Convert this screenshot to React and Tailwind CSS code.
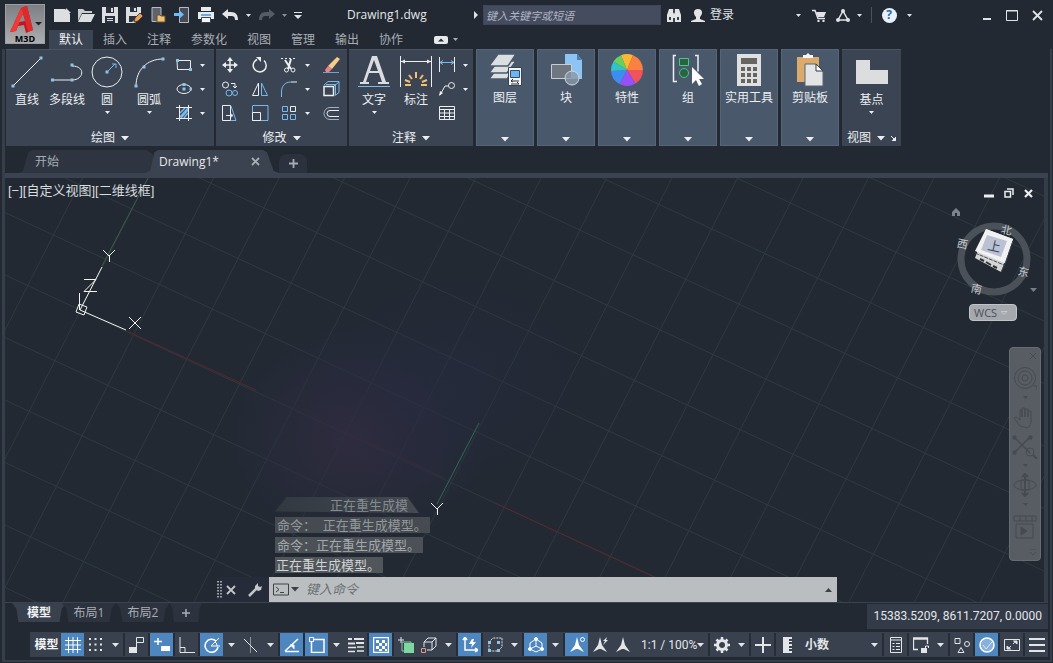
import React from 'react';

function Ic({ w = 16, h = w, children, className = '' }) {
  return (
    <svg width={w} height={h} viewBox={`0 0 ${w} ${h}`} fill="none" stroke="currentColor" className={`shrink-0 ${className}`} aria-hidden="true">
      {children}
    </svg>
  );
}

function Caret({ big = false }) {
  return big ? (
    <Ic w={8} h={5}><path d="M0 0h8L4 4.500z" fill="currentColor" stroke="none" /></Ic>
  ) : (
    <Ic w={5} h={3}><path d="M0 0h5L2.500 3z" fill="currentColor" stroke="none" /></Ic>
  );
}

function Btn({ label, className = '', children }) {
  return (
    <button type="button" aria-label={label} className={`flex shrink-0 items-center justify-center ${className}`}>
      {children}
    </button>
  );
}

/* ---------- title bar ---------- */

const quickAccess = [
  ['新建', <Ic w={17} h={14} key="n"><path d="M0 1h11l5 5v8H0z" fill="#dcdfe2" stroke="none" /><path d="M12 0v5h5z" fill="#dcdfe2" stroke="none" /></Ic>],
  ['打开', <Ic w={18} h={14} key="o"><path d="M1 13V1h5l2 2h7v2H5z" fill="#c9ccd0" stroke="none" /><path d="M5 6h13l-4 8H1z" fill="#dcdfe2" stroke="none" /></Ic>],
  ['保存', <Ic w={16} key="s"><path d="M0 0h16v16H0z" fill="#dcdfe2" stroke="none" /><path d="M4 0h8v6H4zM3 9h10v7H3z" fill="#2b323c" stroke="none" /><path d="M9 1h2v4H9zM5 11h6v1H5zM5 13h6v1H5z" fill="#dcdfe2" stroke="none" /></Ic>],
  ['另存为', <Ic w={17} h={16} key="sa"><path d="M0 0h15v10l-6 6H0z" fill="#dcdfe2" stroke="none" /><path d="M4 0h7v5H4zM3 9h8v2l-5 4H3z" fill="#2b323c" stroke="none" /><path d="M8 1h2v3H8z" fill="#dcdfe2" stroke="none" /><path d="M8 15l1-4 5-5 3 3-5 5z" fill="#e9a25c" stroke="#5b3b28" /></Ic>],
  ['从移动设备打开', <Ic w={16} key="m"><path d="M2 .5h9v14H2z" fill="#5d646e" stroke="#b8bcc2" /><path d="M7 15V8h3l1 1h4v6z" fill="#f1c376" stroke="#6d5330" /></Ic>],
  ['保存到移动设备', <Ic w={16} key="sm"><path d="M5.500 .5h9v15h-9z" fill="#454c57" stroke="#b8bcc2" /><path d="M0 6h5V3l5 4.500L5 12V9H0z" fill="#74b9f2" stroke="none" /></Ic>],
  ['打印', <Ic w={16} key="p"><path d="M3 0h10v4H3zM0 5h16v7H0z" fill="#e8eaec" stroke="none" /><path d="M3 7h10v2H3z" fill="#69a9e6" stroke="none" /><path d="M3.500 10.500h9v5h-9z" fill="#f4f5f6" stroke="#3a4250" /></Ic>],
  ['放弃', <Ic w={17} h={12} key="u"><path d="M0 5l6-5v3h3c5 0 7 3 7 8h-3c0-3-1-4-4-4H6v3z" fill="#e2e4e7" stroke="none" /></Ic>],
];

function TitleBar() {
  return (
    <header className="flex pl-[5px] text-[#dfe2e6]">
      <button type="button" aria-label="应用程序菜单" className="relative mt-1 h-10 w-10 shrink-0 border border-[#9b9ea2] bg-linear-to-b from-[#7c7f83] to-[#acaeb1]">
        <svg width="38" height="38" viewBox="0 0 38 38" className="block" aria-hidden="true">
          <path d="M4 27 15 3l6-2 6 24-7 3-2-8-6 1-2 5z" fill="#c4161f" />
          <path d="M4 27 15 3l3 3-6 15-2 5z" fill="#ef3b35" />
          <path d="M15 3l6-2 6 24-5 2-5-19z" fill="#dd2a2c" />
          <path d="M13 17l4-8 2 7z" fill="#8b8d90" />
          <path d="M29 17h7l-3.500 3.500z" fill="#222" />
        </svg>
        <span className="absolute inset-x-0 bottom-0 text-center text-[9px] leading-[9px] font-bold text-black">M3D</span>
      </button>
      <div className="ml-[3px] min-w-0 flex-1">
        <div className="flex h-[30px] items-center pl-[2px]">
          {quickAccess.map(([label, icon]) => (
            <Btn key={label} label={label} className="h-6 w-6">{icon}</Btn>
          ))}
          <Btn label="放弃列表" className="h-6 w-3"><Caret /></Btn>
          <Btn label="重做" className="h-6 w-6 text-[#555c66]"><Ic w={17} h={12}><path d="M17 5l-6-5v3H8C3 3 1 6 1 11h3c0-3 1-4 4-4h3v3z" fill="currentColor" stroke="none" /></Ic></Btn>
          <Btn label="重做列表" className="h-6 w-3 text-[#8a9099]"><Caret /></Btn>
          <Btn label="自定义快速访问工具栏" className="h-6 w-4"><Ic w={8} h={7}><path d="M0 .5h8" /><path d="M0 3h8L4 7z" fill="currentColor" stroke="none" /></Ic></Btn>
          <h1 className="ml-[41px] flex-1 text-[12px] text-[#e4e6e9]">Drawing1.dwg</h1>
          <Btn label="展开搜索" className="w-[14px]"><Ic w={4} h={8}><path d="M0 0v8l4-4z" fill="currentColor" stroke="none" /></Ic></Btn>
          <input aria-label="搜索" placeholder="键入关键字或短语" className="h-5 w-[178px] border border-[#3e4556] bg-[#454c60] px-[2px] text-[11px] italic outline-none placeholder:text-[#b0b5c0]" />
          <Btn label="查找" className="h-6 w-[26px]"><Ic w={14} h={13}><path d="M2 0h4v3l1 2v8H0V6zM12 0H8v3L7 5v8h7V6z" fill="#e2e4e7" stroke="none" /><path d="M2 8h2v3H2zM10 8h2v3h-2zM6 0h2v3H6zM6 9h2v4H6z" fill="#39414d" stroke="none" /></Ic></Btn>
          <button type="button" className="flex items-center gap-[5px] pl-1">
            <Ic w={14}><path d="M7 1c5 0 5 5 2 8v2l5 2v2H0v-2l5-2V9C2 6 2 1 7 1z" fill="#e2e4e7" stroke="none" /></Ic>
            <span>登录</span>
          </button>
          <Btn label="登录选项" className="ml-[60px] h-6 w-2"><Caret /></Btn>
          <Btn label="应用商店" className="ml-[5px] h-6 w-6"><Ic w={14}><path d="M0 2.500h3l3 8h7" strokeWidth="1.500" /><path d="M4 4h10l-2 5H6z" fill="currentColor" stroke="none" /><circle cx="6.500" cy="13" r="1.200" fill="currentColor" stroke="none" /><circle cx="11.500" cy="13" r="1.200" fill="currentColor" stroke="none" /></Ic></Btn>
          <Btn label="Autodesk" className="h-6 w-6"><Ic w={14} h={13}><path d="M7 2 2 11h10z" strokeWidth="1.500" /><g fill="currentColor" stroke="none"><circle cx="7" cy="2" r="2" /><circle cx="2" cy="11" r="2" /><circle cx="12" cy="11" r="2" /></g></Ic></Btn>
          <Btn label="Autodesk 选项" className="h-6 w-2"><Caret /></Btn>
          <span className="ml-2 h-4 w-px bg-[#4b525e]" />
          <Btn label="帮助" className="ml-[5px] h-6 w-6"><span className="flex h-[15px] w-[15px] items-center justify-center rounded-full bg-[#e8f1fb] text-[12px] leading-none font-bold text-[#2b6aa8]">?</span></Btn>
          <Btn label="帮助选项" className="ml-1 h-6 w-2"><Caret /></Btn>
          <Btn label="最小化" className="ml-[62px] h-6 w-6"><Ic w={8} h={12}><path d="M0 10h8" strokeWidth="2" /></Ic></Btn>
          <Btn label="最大化" className="h-6 w-[26px]"><Ic w={12} h={11}><path d="M.5 .5h11v10H.5z" /><path d="M0 1h12" /></Ic></Btn>
          <Btn label="关闭" className="mr-1 h-6 w-6"><Ic w={11}><path d="M1 1l9 9M10 1l-9 9" strokeWidth="1.800" /></Ic></Btn>
        </div>
        <nav className="flex h-[19px] items-stretch pl-px text-[#a9aeb6]" aria-label="功能区选项卡">
          {['默认', '插入', '注释', '参数化', '视图', '管理', '输出', '协作'].map((t, i) => (
            <button key={t} type="button" className={i === 0 ? 'bg-[#3b4453] px-[10px] text-[#f1f2f4]' : 'px-[10px]'}>{t}</button>
          ))}
          <Btn label="最小化功能区" className="ml-[21px] gap-[5px]"><Ic w={14} h={8}><rect width="14" height="8" rx="2" fill="#e6e8ea" stroke="none" /><path d="M4 5.500h6L7 2.500z" fill="#252c36" stroke="none" /></Ic><Caret /></Btn>
        </nav>
      </div>
    </header>
  );
}

/* ---------- ribbon ---------- */

const dot = (x, y) => <path d={`M${x - 1.5} ${y - 1.5}h3v3h-3z`} fill="#8fc3ea" stroke="none" />;

function Big({ label, className = '', caret, children }) {
  return (
    <button type="button" className={`flex shrink-0 flex-col items-center ${className}`}>
      {children}
      <span className="mt-1 leading-4 whitespace-nowrap">{label}</span>
      {caret && <span className="mt-[3px]"><Caret /></span>}
    </button>
  );
}

function Small({ label, caret, children }) {
  return (
    <Btn label={label} className="h-6 gap-2">
      {children}
      {caret && <Caret />}
    </Btn>
  );
}

function Panel({ title, className = '', launcher, children }) {
  return (
    <section className={`flex flex-col border-t border-[#4a5362] bg-[#3b4453] ${className}`}>
      <div className="flex flex-1 items-start">{children}</div>
      <button type="button" className="flex h-4 items-center justify-center gap-[6px]">
        <span>{title}</span>
        <Caret big />
        {launcher && <Ic w={5}><path d="M0 0l4 4M5 1v4H1z" fill="currentColor" /></Ic>}
      </button>
    </section>
  );
}

function Tile({ label, children }) {
  return (
    <button type="button" className="flex w-[58px] shrink-0 flex-col items-center border border-[#56647a] bg-[#4a586c] pt-[3px]">
      {children}
      <span className="mt-[3px] leading-4 whitespace-nowrap">{label}</span>
      <span className="mt-auto mb-[3px]"><Caret big /></span>
    </button>
  );
}

const B = '#79b9ec';

function Ribbon() {
  return (
    <div className="flex h-[97px] gap-[3px] pl-px text-[#eceef1]">
      <div className="flex gap-[2px]">
        <Panel title="绘图" className="w-[208px]">
          <div className="flex pt-[6px] pl-[5px]">
            <Big label="直线" className="w-8"><Ic w={32}><path d="M2 30 30 2" />{dot(2, 30)}{dot(30, 2)}</Ic></Big>
            <Big label="多段线" className="ml-1 w-10"><Ic w={32}><path d="M1 24h20c12 0 14-14 0-14" />{dot(1.5, 24)}{dot(21, 24)}{dot(21, 9)}</Ic></Big>
            <Big label="圆" caret className="w-10"><Ic w={32}><circle cx="16" cy="16" r="15" /><path d="M16 16 24 8M21 8h4v4" stroke={B} />{dot(16, 16)}</Ic></Big>
            <Big label="圆弧" caret className="w-11"><Ic w={32}><path d="M3 30C3 14 14 3 30 3" />{dot(3, 30)}{dot(11, 11)}{dot(30, 3)}</Ic></Big>
          </div>
          <div className="ml-[5px] flex flex-col pt-[3px]">
            <Small label="矩形" caret><Ic><path d="M1 3.500h13.500v9H1.500z" />{dot(1.5, 3.5)}{dot(14.5, 12.5)}</Ic></Small>
            <Small label="椭圆" caret><Ic><ellipse cx="8" cy="8" rx="7" ry="4.500" />{dot(8, 8)}{dot(8, 3.5)}{dot(15, 8)}</Ic></Small>
            <Small label="图案填充" caret><Ic><path d="M4 8l5-5M4 12l8-9M5 13l7-8M8 13l4-5" stroke={B} strokeWidth="1.500" /><path d="M3.500 0v16M12.500 0v16M0 2.500h16M0 13.500h16" /></Ic></Small>
          </div>
        </Panel>
        <Panel title="修改" className="w-[131px]">
          <div className="grid flex-1 grid-cols-[30px_29px_42px_24px] justify-items-start pt-[3px] pl-[6px]">
            <Small label="移动"><Ic><path d="M8 2v12M2 8h12" strokeWidth="1.500" /><path d="M8 0l3 4H5zM8 16l3-4H5zM0 8l4-3v6zM16 8l-4-3v6z" fill="currentColor" stroke="none" /></Ic></Small>
            <Small label="旋转"><Ic><path d="M5 2.500a6.500 6.500 0 1 0 7 1" strokeWidth="1.500" /><path d="M4 0h5v5z" fill="currentColor" stroke="none" /></Ic></Small>
            <Small label="修剪" caret><Ic><path d="M0 1.500h2M4 1.500h2M8 1.500h2M12 1.500h2" /><path d="M4 3l6 9M10 2 7 12" strokeWidth="2" /><circle cx="5.500" cy="13" r="2" /><circle cx="12" cy="13" r="2" /></Ic></Small>
            <Small label="删除"><Ic w={17} h={16}><path d="M14 0l3 2-8 10-4-3z" fill="#f5cf8a" stroke="none" /><path d="M5 9l4 3-3 3H3l-1-2z" fill="#f0808d" stroke="none" /><path d="M0 15.500h16" stroke="#6fa5d3" /></Ic></Small>
            <Small label="复制"><Ic><circle cx="3.500" cy="4" r="3" /><path d="M9 2.500h4v4M11 5l2 2 2-2" /><circle cx="7" cy="12" r="3" stroke={B} /><circle cx="13" cy="12" r="2.500" stroke={B} /></Ic></Small>
            <Small label="镜像"><Ic><path d="M6.500 2v12.500H.5z" /><path d="M9.500 2v12.500h6z" stroke={B} /></Ic></Small>
            <Small label="圆角" caret><Ic><path d="M.5 16V11C.5 5 4 1 10 1" stroke={B} /><path d="M10 1h6" /></Ic></Small>
            <Small label="分解"><Ic w={17} h={16}><path d="M1 5.500h9.500v9H1z" strokeWidth="1.500" /><path d="M1 4 5 .5h11v11l-4 3M11 5l5-4M12.500 4v10M3 3.500h10" stroke={B} /></Ic></Small>
            <Small label="拉伸"><Ic><path d="M.5 .5h8v15h-8z" /><path d="M9 1l5 14.500H9" stroke={B} /><path d="M4 10.500h6M8 8l3 2.500L8 13" /></Ic></Small>
            <Small label="缩放"><Ic w={17} h={16}><path d="M1 .5h15v15" stroke={B} /><path d="M.5 .5v15H16" stroke={B} /><path d="M.5 7.500h8v8h-8z" /></Ic></Small>
            <Small label="阵列" caret><Ic w={16}><path d="M1.500 1.500h5v5h-5zM1.500 9.500h5v5h-5zM9.500 9.500h5v5h-5z" stroke={B} /><path d="M9.500 1.500h5v5h-5z" /></Ic></Small>
            <Small label="偏移"><Ic w={17} h={16}><path d="M16 5.500H7a3 3 0 0 0 0 6h9" /><path d="M16 2.500H7a5.500 5.500 0 0 0 0 12h9" stroke="#9fb3c8" /></Ic></Small>
          </div>
        </Panel>
        <Panel title="注释" className="w-[124px]">
          <div className="flex pt-[6px] pl-[5px]">
            <Big label="文字" caret className="w-10"><Ic w={32}><path d="M14 0h5l9 26h3v2H20v-2h4l-3-9h-10l-3 9h3v2H2v-2h3zM12 15h8l-4-11z" fill="#d9dce0" stroke="none" /><path d="M0 30.500h32" stroke={B} /></Ic></Big>
            <Big label="标注" className="ml-[2px] w-10"><Ic w={32}><path d="M.5 0v31M31.500 0v31M1 5.500h30" /><path d="M1 5.500l4-2v4zM31 5.500l-4-2v4z" fill="currentColor" stroke="none" /><g stroke="#f5bf72" strokeWidth="2"><path d="M16 16v6M9 19l3 4M23 19l-3 4M5 24l5 2M27 24l-5 2M5 29h6M21 29h6" /></g></Ic></Big>
          </div>
          <div className="ml-[3px] flex flex-col items-start pt-[3px]">
            <Small label="线性标注" caret><Ic><path d="M.5 0v15M15.500 0v15" /><path d="M1 5.500h14M4 3.500l-3 2 3 2M12 3.500l3 2-3 2" stroke={B} /></Ic></Small>
            <Small label="引线" caret><Ic><path d="M1 14l5-9h4" /><circle cx="12.500" cy="4.500" r="3" /><path d="M0 15l1-5 3 2z" fill="currentColor" stroke="none" /></Ic></Small>
            <Small label="表格"><Ic><path d="M.5 1.500h15v13H.5zM0 4.500h16M0 8h16M0 11.500h16M5.500 4v10M10.500 4v10" /></Ic></Small>
          </div>
        </Panel>
      </div>
      <Tile label="图层"><Ic w={33} h={34}><g fill="#dcdfe2" stroke="#4a586c" strokeWidth="1.500"><path d="M9 14h18l-9 12H0z" /><path d="M9 8h18l-9 12H0z" /><path d="M9 1h18l-8 12H0z" /></g><path d="M19.500 14.500h13v18h-13z" fill="#f2f4f6" stroke="#3a4453" /><path d="M21.500 17.500h9v7h-9z" fill="#6fb5ee" stroke="#2d4e70" /><path d="M22 28h8M22 31h8M24 26l-2 2 2 1M28 29l2 2" stroke="#333" /></Ic></Tile>
      <Tile label="块"><Ic w={33} h={34}><path d="M15 1h12l5 6v19H15z" fill="#8dc4f3" stroke="none" /><path d="M27 1v6h5z" fill="#4a7fae" stroke="none" /><path d="M1.500 11.500h20v14h-20z" fill="#6f7680" stroke="#c9ccd1" /><circle cx="22" cy="25" r="7" fill="#8a98a9" fillOpacity=".8" stroke="#d5d8dc" /></Ic></Tile>
      <Tile label="特性"><Ic w={34}><g stroke="none"><path d="M17 17 11 2.200A16 16 0 0 1 23 2.200z" fill="#fdb833" /><path d="M17 17 23 2.200A16 16 0 0 1 33 17z" fill="#fb8140" /><path d="M17 17H33a16 16 0 0 1-7.500 13.500z" fill="#f0535b" /><path d="M17 17l8.500 13.500a16 16 0 0 1-16 0.500z" fill="#9650f5" /><path d="M17 17 9.500 31A16 16 0 0 1 1 18z" fill="#3f8df0" /><path d="M17 17 1 18A16 16 0 0 1 3.500 8.500z" fill="#2fc4c9" /><path d="M17 17 3.500 8.500A16 16 0 0 1 11 2.200z" fill="#6bcf5e" /></g></Ic></Tile>
      <Tile label="组"><Ic w={34}><path d="M5 2.500H2.500v26H6M24 2.500h3v16" strokeWidth="1.500" /><path d="M8.500 5.500h9v7h-9z" fill="#286344" stroke="#4fc486" /><circle cx="13" cy="20" r="4.500" fill="#286344" stroke="#4fc486" /><path d="M21 14v17l4-4 3 6 3-2-3-5h5z" fill="#fff" stroke="none" /></Ic></Tile>
      <Tile label="实用工具"><Ic w={24} h={34}><path d="M0 1h24v32H0z" fill="#dfe0e2" stroke="none" /><path d="M4 5h16v6H4zM4 14h4v4H4zM10 14h4v4h-4zM16 14h4v4h-4zM4 20h4v4H4zM10 20h4v4h-4zM16 20h4v4h-4zM4 26h4v4H4zM10 26h4v4h-4zM16 26h4v4h-4z" fill="#68645f" stroke="none" /></Ic></Tile>
      <Tile label="剪贴板"><Ic w={28} h={34}><path d="M1 4h22v25H1z" fill="#dcaa6c" stroke="none" /><path d="M7 5V2h3l2-2 2 2h3v3z" fill="#f5f6f7" stroke="none" /><path d="M9 11h11l7 7v15H9z" fill="#e3e4e6" stroke="#5b6472" /><path d="M20 11v7h7z" fill="#fff" stroke="#2f3844" /></Ic></Tile>
      <Panel title="视图" launcher className="w-[59px]">
        <div className="flex flex-1 justify-center pt-[6px]">
          <Big label="基点" caret><Ic w={32}><path d="M0 4h14v10h18v14H0z" fill="#dcdddf" stroke="none" /></Ic></Big>
        </div>
      </Panel>
    </div>
  );
}

function FileTabs() {
  return (
    <nav className="flex h-8 items-end border-b-[5px] border-[#3b4350] pl-[14px] text-[12px] text-[#a7acb4]" aria-label="文件选项卡">
      <button type="button" className="h-[23px] w-[134px] bg-[#2e3541] pl-4 text-left [clip-path:polygon(0_100%,3%_90%,7%_10%,10%_0,95%_0,100%_20%,100%_100%)]">开始</button>
      <div className="-ml-2 flex h-[23px] w-[134px] items-center bg-[#3b4350] pr-[16px] pl-[14px] text-[#e7e9ec] [clip-path:polygon(0_100%,4%_90%,7%_10%,10%_0,88%_0,91%_10%,96%_90%,100%_100%)]">
        <button type="button" className="flex-1 text-left">Drawing1*</button>
        <Btn label="关闭图形" className="h-4 w-4 text-[#a9aeb6]"><Ic w={9}><path d="M1 1l7 7M8 1L1 8" strokeWidth="1.800" /></Ic></Btn>
      </div>
      <Btn label="新图形" className="h-[19px] w-7 rounded-t-lg bg-[#2b323d]"><Ic w={9}><path d="M4.500 0v9M0 4.500h9" strokeWidth="1.800" /></Ic></Btn>
    </nav>
  );
}

/* ---------- drawing area ---------- */

const range = (from, to) => Array.from({ length: to - from + 1 }, (_, i) => from + i);

function Grid() {
  return (
    <svg viewBox="0 0 1039 424" preserveAspectRatio="xMinYMin slice" className="absolute inset-0 h-full w-full" fill="none" aria-hidden="true">
      <defs>
        <radialGradient id="violet"><stop offset="0" stopColor="#332c42" stopOpacity=".8" /><stop offset=".6" stopColor="#2b2b40" stopOpacity=".5" /><stop offset="1" stopColor="#2a2b42" stopOpacity="0" /></radialGradient>
        <radialGradient id="navy"><stop offset="0" stopColor="#262b42" stopOpacity=".5" /><stop offset="1" stopColor="#262b42" stopOpacity="0" /></radialGradient>
      </defs>
      <g stroke="#2f3a3f">
        {range(-9, 5).map((k) => <path key={k} d={`M0 ${97 + 62.5 * k}L1040 ${97 + 62.5 * k + 484}`} />)}
        {range(-1, 20).map((k) => <path key={k} d={`M${143 + 65.5 * k} 0L${143 + 65.5 * k - 216} 424`} />)}
      </g>
      <ellipse cx="350" cy="260" rx="135" ry="115" fill="url(#violet)" />
      <ellipse cx="450" cy="200" rx="150" ry="120" fill="url(#navy)" />
      <path d="M97 88 143 0" stroke="#3c5c4c" />
      <path d="M432 326 474 245" stroke="#2b6a55" />
      <path d="M124 154 251 212" stroke="#5a2530" />
      <path d="M335 251 440 300" stroke="#372a3a" />
      <path d="M490 325 650 399" stroke="#5a2530" />
      <g stroke="#f2f3f4">
        <path d="M75 132 97 89M75 132l46 20M74.500 132V115M71 134l3-8 8 3-3 8-8-3z" />
        <path d="M98 72l6 6 6-6M104.500 78v6M79 101.500h12l-12 12h13M124 139l12 12M136 139l-12 12" />
        <path d="M426 325l6 6 6-6M432.500 331v6" />
      </g>
    </svg>
  );
}

function ViewCube() {
  return (
    <div className="absolute top-[20px] right-[3px] h-[124px] w-[90px] text-[#c8cbd0]">
      <svg width="90" height="124" viewBox="0 0 90 124" aria-hidden="true" fill="none">
        <path d="M1 18V14l4-4 4 4v4H6v-3H4v3z" fill="#7d838b" />
        <circle cx="43" cy="61" r="33" stroke="#4b5158" strokeWidth="7" />
        <path d="M35 31 62 41 50 74 24 60z" fill="#d3d5d7" />
        <path d="M24 53 35 31 62 41 54 65z" fill="#f1f1f1" />
        <path d="M36 37 56 43 50 59 30 52z" fill="#b9c1d2" />
        <path d="M24 55 53 67M62 43 54 66 50 74" stroke="#454b54" strokeDasharray="4 1" />
        <path d="M29 61l4 2M35 64l5 3M42 68l4 2" stroke="#333" strokeWidth="2" />
        <path d="M79 90h7l-3.500 4z" fill="#777d85" />
      </svg>
      <span className="absolute top-[40px] left-[37px] rotate-12 text-[13px] leading-4 text-[#414b64]">上</span>
      <span className="absolute top-[24px] left-[50px] rotate-12 text-[11px] leading-4">北</span>
      <span className="absolute top-[38px] left-[6px] rotate-12 text-[11px] leading-4">西</span>
      <span className="absolute top-[66px] left-[67px] rotate-12 text-[11px] leading-4">东</span>
      <span className="absolute top-[83px] left-[20px] rotate-12 text-[11px] leading-4">南</span>
      <button type="button" className="absolute top-[106px] left-[18px] flex h-[17px] w-12 items-center gap-1 rounded border border-[#c0c3c7] bg-[#a5a9ae] pl-1 text-[11px] leading-none text-[#4a5058]">
        WCS <Ic w={7} h={4}><path d="M0 .5h6L3 3.500z" stroke="#c6c9cd" /></Ic>
      </button>
    </div>
  );
}

function NavBar() {
  return (
    <div className="absolute top-[169px] right-[3px] flex w-8 flex-col items-center rounded border border-[#666c72] bg-[#575d62] py-1 text-[#454b51]">
      <Btn label="关闭导航栏" className="h-2 w-full justify-end pr-1"><Ic w={6}><path d="M0 0l6 6M6 0L0 6" /></Ic></Btn>
      <Btn label="控制盘" className="h-9 w-8"><Ic w={24}><circle cx="12" cy="12" r="10.500" /><circle cx="12" cy="12" r="7" /><circle cx="12" cy="12" r="3" /><path d="M20 20h4v4" /></Ic></Btn>
      <Caret />
      <Btn label="平移" className="h-9 w-8"><Ic w={24}><path d="M7 21 1 13l2-1 4 3V5h2v7-9h3v9-8h3v8-6h3v12l-3 5z" /></Ic></Btn>
      <Btn label="缩放" className="h-6 w-8"><Ic w={26} h={24}><path d="M2 2l16 16M18 2 2 18" strokeWidth="1.500" /><path d="M1 1h3v3H1zM17 1h3v3h-3zM1 16h3v3H1z" fill="currentColor" /><circle cx="18" cy="17" r="4" /><path d="M21 20l4 4" strokeWidth="2" /></Ic></Btn>
      <span className="mt-[5px]"><Caret /></span>
      <Btn label="动态观察" className="h-9 w-8"><Ic w={24}><path d="M12 1v22M9 4l3-3 3 3M9 20l3 3 3-3" strokeWidth="2" /><ellipse cx="12" cy="12" rx="11" ry="5" /><path d="M8 7h8v10H8z" /></Ic></Btn>
      <Caret />
      <Btn label="ShowMotion" className="h-[42px] w-8"><Ic w={24}><path d="M1 1h22v5H1zM7 1v5M13 1v5M19 1v5M3 9h17v14H3z" /><path d="M8 12v8l6-4z" fill="currentColor" /></Ic></Btn>
      <Btn label="导航栏选项" className="h-2 w-full justify-end pr-1"><Ic w={6}><path d="M0 3l3 3 3-3M0 0h6" /></Ic></Btn>
    </div>
  );
}

function CommandLine() {
  return (
    <div className="absolute right-[207px] bottom-0 left-[212px]">
      <div className="ml-[58px] flex flex-col items-start gap-1 pb-1 text-[13px] leading-4 text-[#a3a8ac]">
        <span className="w-36 bg-linear-to-r from-[#31383f] to-[#454b52] pl-[55px] text-[#858b90] [clip-path:polygon(8%_0,92%_0,100%_100%,0_90%)]">正在重生成模</span>
        <span className="bg-[#454b50] pr-[3px] pl-[2px] text-[#93989d] whitespace-pre">命令：  正在重生成模型。</span>
        <span className="bg-[#4b5156] pr-[3px] pl-[2px] whitespace-pre">命令：正在重生成模型。</span>
        <span className="bg-[#50565a] pr-[3px] pl-px text-[#d0d3d6]">正在重生成模型。</span>
      </div>
      <div className="flex h-[25px] items-stretch text-[#c3c7cc]">
        <span className="flex w-[52px] items-center justify-between bg-[#252b39] pr-[7px]">
          <Ic w={5} h={18}><path d="M1 0v18M4 0v18" strokeDasharray="1.500 1.500" strokeWidth="1.500" /></Ic>
          <span className="flex items-center gap-[12px]">
            <Btn label="关闭命令行"><Ic w={10}><path d="M1 1l8 8M9 1L1 9" strokeWidth="1.800" /></Ic></Btn>
            <Btn label="自定义"><Ic w={14}><path d="M1 13l8-8" strokeWidth="2.500" /><path d="M7 3l3-3v3l2 1 2-1-1 4-3 1-3-2z" fill="currentColor" stroke="none" /></Ic></Btn>
          </span>
        </span>
        <div className="flex flex-1 items-center bg-[#bbbec0] pr-[5px] pl-1 text-[#3c4148]">
          <Btn label="最近使用的命令" className="gap-[2px]"><Ic w={16} h={13}><path d="M.5 1h15v11H.5z" /><path d="M3 4l3 2.500L3 9M7 9.500h4" /></Ic><Caret big /></Btn>
          <input aria-label="命令" placeholder="键入命令" className="ml-[7px] h-full min-w-0 flex-1 bg-transparent pb-[2px] text-[13px] italic outline-none placeholder:text-[#6b7076]" />
          <Ic w={7} h={4}><path d="M0 4h7L3.500 0z" fill="currentColor" stroke="none" /></Ic>
        </div>
      </div>
    </div>
  );
}

function Drawing() {
  return (
    <main className="relative min-h-[300px] flex-1 overflow-hidden border-r-4 border-[#343b49] bg-[#222932]">
      <Grid />
      <button type="button" className="absolute top-[5px] left-[3px] font-['Liberation_Sans','Noto_Sans_CJK_SC',sans-serif] text-[13px] leading-4 text-[#d8dbdf]">[−][自定义视图][二维线框]</button>
      <div className="absolute top-[10px] right-[11px] flex items-center gap-[10px] text-[#eceef0]">
        <Btn label="最小化视口"><Ic w={10}><path d="M0 8h10" strokeWidth="3" /></Ic></Btn>
        <Btn label="还原视口"><Ic w={10}><path d="M3 1h6v6" strokeWidth="1.500" /><path d="M1 3.500h5.500V9H1z" strokeWidth="1.500" /></Ic></Btn>
        <Btn label="关闭视口"><Ic w={9}><path d="M1 1l7 7M8 1L1 8" strokeWidth="2.200" /></Ic></Btn>
      </div>
      <ViewCube />
      <NavBar />
      <CommandLine />
    </main>
  );
}

/* ---------- bottom bars ---------- */

function LayoutTabs() {
  const shape = '[clip-path:polygon(0_0,100%_0,92%_30%,88%_100%,12%_100%,8%_30%)]';
  return (
    <div className="flex h-[30px] items-start border-t border-[#3b4350] text-[12px] text-[#a9aeb6]">
      <nav className="flex flex-1 items-start pl-[7px]" aria-label="布局选项卡">
        <button type="button" className={`h-[19px] w-[54px] bg-[#39414e] font-bold text-[#f0f1f3] ${shape}`}>模型</button>
        <button type="button" className={`-ml-[4px] h-[19px] w-[54px] bg-[#2c333e] ${shape}`}>布局1</button>
        <button type="button" className={`h-[19px] w-[54px] bg-[#2c333e] ${shape}`}>布局2</button>
        <Btn label="新建布局" className={`h-[19px] w-8 bg-[#2c333e] ${shape}`}><Ic w={8}><path d="M4 0v8M0 4h8" strokeWidth="1.500" /></Ic></Btn>
      </nav>
      <output className="mt-px bg-[#333b48] px-[6px] font-[Roboto,sans-serif] leading-[25px] text-[#e3e6ea]">15383.5209, 8611.7207, 0.0000</output>
    </div>
  );
}

function DownArrow() {
  return <Ic w={7} h={4}><path d="M0 0h7L3.500 4z" fill="currentColor" stroke="none" /></Ic>;
}

function Cell({ label, on, caret, gap, children }) {
  return (
    <div className={`flex shrink-0 items-stretch ${gap ? 'border-l-2 border-[#262d37]' : ''}`}>
      <Btn label={label} className={on ? 'h-[23px] w-[23px] bg-[#4e86c0] text-white' : 'h-[23px] w-[23px]'}>{children}</Btn>
      {caret && <Btn label={`${label}选项`} className="w-4"><DownArrow /></Btn>}
    </div>
  );
}

const figure = <path d="M8 0l2 8 5 7-6-3H7l-6 3 5-7z" fill="currentColor" stroke="none" />;

function StatusBar() {
  return (
    <footer className="ml-[25px] flex h-[25px] items-center bg-[#39414e] text-[12px] text-[#e3e6e9]">
      <button type="button" className="w-[31px] shrink-0 pl-[2px] font-bold whitespace-nowrap text-[#f2f3f5]">模型</button>
      <Cell label="栅格" on><Ic><path d="M3.500 0v16M8 0v16M12.500 0v16M0 3.500h16M0 8h16M0 12.500h16" /></Ic></Cell>
      <Cell label="捕捉" caret><Ic w={13}><path d="M0 1h13M0 6.500h13M0 12h13" strokeWidth="2" strokeDasharray="2 3.500" /></Ic></Cell>
      <Cell label="推断约束" gap><Ic><path d="M0 10h8v6H0z" fill="currentColor" stroke="none" /><path d="M7.500 10V.5h7v5h-7" /></Ic></Cell>
      <Cell label="动态输入" gap on><Ic><path d="M4 1v7M0 4.500h8" strokeWidth="1.500" /><path d="M7 9h9v5H7z" fill="currentColor" stroke="none" /></Ic></Cell>
      <Cell label="正交" gap><Ic><path d="M1 0v15.500h15M1 10.500h5v5" /></Ic></Cell>
      <Cell label="极轴追踪" on caret gap><Ic><path d="M12 4A6.500 6.500 0 1 0 14 10" strokeWidth="1.500" /><path d="M7 9l8-8M7 9h9M11 5c2 1 2 3 2 4" /></Ic></Cell>
      <Cell label="等轴测草图" caret><Ic><path d="M7.500 0v16" stroke="#8b929c" /><path d="M1 2l13 13M4 5l4 4" /></Ic></Cell>
      <Cell label="对象捕捉追踪" on gap><Ic><path d="M1 14.500h14M1 14 14 2" strokeWidth="1.500" /><path d="M6 8h4v4" fill="currentColor" /></Ic></Cell>
      <Cell label="对象捕捉" on caret gap><Ic><path d="M4 2.500h11v13H2.500V5" strokeWidth="1.500" /><path d="M.5 .5h4v4h-4z" /></Ic></Cell>
      <Cell label="线宽"><Ic><path d="M6 2h10M0 2h4" strokeWidth="2" /><path d="M8 6h8M0 6.500h7" strokeWidth="2" /><path d="M9 10h7M0 10.500h8M0 14.500h7M9 14h7" strokeWidth="1.500" /></Ic></Cell>
      <Cell label="透明度" on gap><Ic><path d="M.5 .5h15v15H.5z" strokeWidth="1.500" /><path d="M3 3h3v3H3zM9 3h3v3H9zM6 6h3v3H6zM12 6h2v3h-2zM3 9h3v3H3zM9 9h3v3H9zM6 12h3v2H6zM12 12h2v2h-2z" fill="currentColor" stroke="none" /></Ic></Cell>
      <Cell label="选择循环" gap><Ic><path d="M3 0v6M0 3h6" /><path d="M4 5h9v9H4z" stroke="#7fcf9f" /><path d="M6 6h10v10H6z" fill="#7ed6a0" stroke="none" /></Ic></Cell>
      <Cell label="三维对象捕捉" caret><Ic><path d="M3 5l4-4h8v8l-4 4H6M3 5v5M3 5h8v8M11 5l4-4" /><path d="M.5 11.500h4v4h-4z" stroke="#dc9a8a" /></Ic></Cell>
      <Cell label="动态 UCS" on gap><Ic><path d="M3 1v12h12M1 3l2-3 2 3M13 11l3 2-3 2" strokeWidth="1.500" /><path d="M10 2 7 7h3l-1 4 5-6h-3l1-3z" fill="currentColor" stroke="none" /></Ic></Cell>
      <Cell label="选择过滤" caret gap><Ic><path d="M2 5l4-4h9v9l-4 4H2z" strokeDasharray="2 1" /><path d="M1 4h3v3H1zM10 4h3v3h-3zM1 12h3v3H1zM10 12h3v3h-3z" fill="#8fc3ea" stroke="none" /></Ic></Cell>
      <Cell label="小控件" on caret gap><Ic><path d="M8 2l6 4v6l-6 3-6-3V6zM8 2v7l-6 3M8 9l6 3" /><circle cx="8" cy="2" r="1.500" fill="currentColor" /><circle cx="2" cy="12" r="1.500" fill="currentColor" /><circle cx="14" cy="12" r="1.500" fill="currentColor" /></Ic></Cell>
      <Cell label="注释可见性" on gap><Ic>{figure}<circle cx="13.500" cy="2.500" r="2" /></Ic></Cell>
      <Cell label="自动缩放"><Ic>{figure}<path d="M15 0l-4 4h2l-2 4 5-5h-2z" fill="currentColor" stroke="none" /></Ic></Cell>
      <Cell label="注释比例"><Ic>{figure}</Ic></Cell>
      <button type="button" className="flex w-[74px] shrink-0 items-center justify-between pr-1 pl-[7px] font-[Roboto,sans-serif] whitespace-nowrap">1:1 / 100% <DownArrow /></button>
      <Cell label="切换工作空间" caret gap><Ic><circle cx="8" cy="8" r="4.500" strokeWidth="3" /><path d="M8 0v3M8 13v3M0 8h3M13 8h3M2.500 2.500l2 2M11.500 11.500l2 2M2.500 13.500l2-2M11.500 4.500l2-2" strokeWidth="2.500" /></Ic></Cell>
      <Cell label="注释监视器" gap><Ic><path d="M8 0v16M0 8h16" strokeWidth="2" /></Ic></Cell>
      <Cell label="单位" gap><Ic w={9} h={16}><path d="M0 0h9v2H6v2h3v1H6v2h3v2H6v2h3v1H6v2h3v2H0z" fill="currentColor" stroke="none" /></Ic></Cell>
      <button type="button" className="flex flex-1 items-center justify-between pr-1 pl-[6px] font-bold whitespace-nowrap">小数 <DownArrow /></button>
      <Cell label="快捷特性" gap><Ic w={12} h={16}><path d="M.5 .5h11v15H.5zM0 3h12M2.500 6.500h2M6 6.500h4M2.500 9.500h2M6 9.500h4M2.500 12.500h2M6 12.500h4" /></Ic></Cell>
      <Cell label="锁定用户界面" caret gap><Ic><path d="M5 12.500H.5V1h14v6M0 2h15" strokeWidth="1.300" /><path d="M8 11h6v5H8z" fill="currentColor" stroke="none" /><path d="M12.500 11V9h3v2" /></Ic></Cell>
      <Cell label="隔离对象" gap><Ic><path d="M1 1.500h5v5H1z" /><circle cx="13" cy="7" r="2.500" /><path d="M7 10.500l3 5H4z" /></Ic></Cell>
      <Cell label="硬件加速" on gap><Ic><circle cx="8" cy="8" r="7" fill="#86b0dd" strokeWidth="1.500" /><path d="M4 8l3 4 6-7" stroke="#dbe9f7" /></Ic></Cell>
      <Cell label="全屏显示" gap><Ic><path d="M.5 2.500h15v11H.5z" /><path d="M9 7l3-3M9.500 4H13v3zM7 9l-3 3M3 9v3h3.500z" fill="currentColor" /></Ic></Cell>
      <Cell label="自定义" gap><Ic><path d="M0 2h16M0 8h16M0 14h16" strokeWidth="2" /></Ic></Cell>
    </footer>
  );
}

export default function App() {
  return (
    <div className="flex min-h-screen flex-col bg-[#222932] font-['Open_Sans','Noto_Sans_CJK_SC',sans-serif] text-[12px] leading-4">
      <TitleBar />
      <div className="mr-px mb-px ml-[2px] flex flex-1 flex-col border-r-2 border-b-2 border-l-[3px] border-[#363e4a] pr-[2px] pb-[3px]">
        <Ribbon />
        <FileTabs />
        <Drawing />
        <LayoutTabs />
        <StatusBar />
      </div>
    </div>
  );
}
